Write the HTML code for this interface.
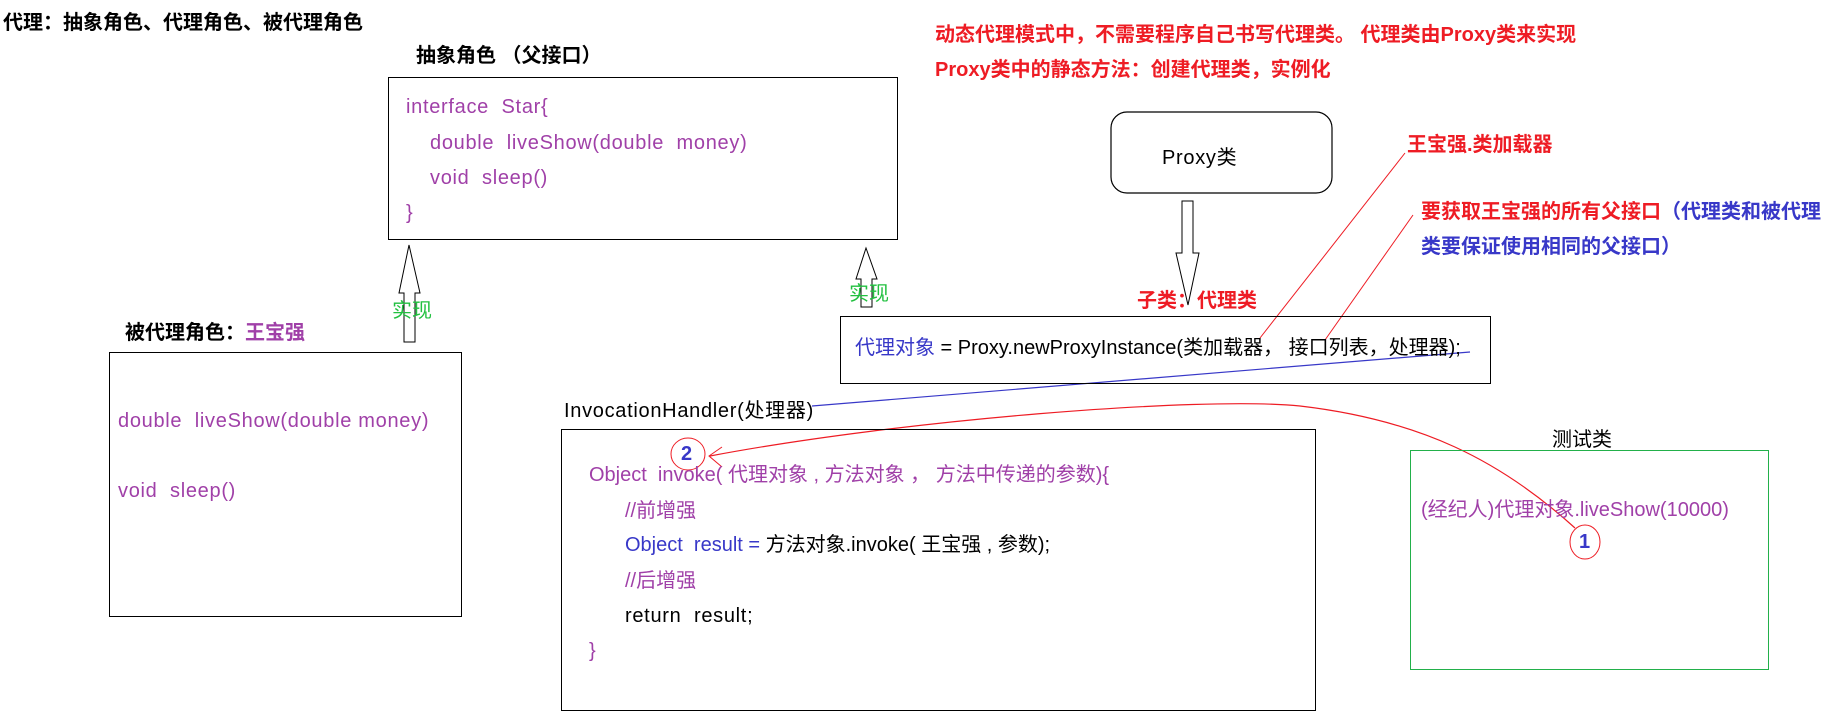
<!DOCTYPE html>
<html><head><meta charset="utf-8"><style>
body{margin:0;width:1825px;height:717px;background:#fff;position:relative;overflow:hidden;font-family:"Liberation Sans","Noto Sans CJK SC",sans-serif;font-size:20px;}
.t{position:absolute;line-height:24px;white-space:pre;}
.c{letter-spacing:0.7px;}
.b{font-weight:bold;}
.p{color:#a040a8;}
.bl{color:#3838c8;}
.r{color:#ee1c24;}
.g{color:#22c040;}
.bx{position:absolute;border:1.5px solid #000;box-sizing:border-box;}
</style></head><body>
<svg width="1825" height="717" style="position:absolute;left:0;top:0">
<path d="M409 245 L420 293 L415 293 L415 342 L404 342 L404 293 L399 293 Z" fill="#fff" stroke="#000" stroke-width="1"/>
<path d="M866 248 L877 279 L872 279 L872 307 L861 307 L861 279 L856 279 Z" fill="#fff" stroke="#000" stroke-width="1"/>
<path d="M1182 201 L1193 201 L1193 253 L1199 253 L1188 305 L1176 253 L1182 253 Z" fill="#fff" stroke="#000" stroke-width="1"/>
<rect x="1111" y="112" width="221" height="81" rx="16" ry="16" fill="none" stroke="#000" stroke-width="1.2"/>
<line x1="1405" y1="153" x2="1260" y2="338" stroke="#ee1c24" stroke-width="1"/>
<line x1="1413" y1="215" x2="1325" y2="340" stroke="#ee1c24" stroke-width="1"/>
<line x1="812" y1="406" x2="1470" y2="352" stroke="#3838c8" stroke-width="1.2"/>
<path d="M1575 528 C1500 460 1420 420 1300 406 C1200 396 900 420 710 456" fill="none" stroke="#ee1c24" stroke-width="1.2"/>
<path d="M722 447 L709 456 L722 467" fill="none" stroke="#ee1c24" stroke-width="1"/>
<ellipse cx="688" cy="454" rx="17" ry="16" fill="none" stroke="#ee1c24" stroke-width="1"/>
<ellipse cx="1585" cy="542" rx="15" ry="17" fill="none" stroke="#ee1c24" stroke-width="1"/>
</svg>

<div class="t b" style="left:3px;top:11px">代理：抽象角色、代理角色、被代理角色</div>
<div class="t b" style="left:416px;top:44px">抽象角色 （父接口）</div>
<div class="bx" style="left:388px;top:77px;width:510px;height:163px"></div>
<div class="t p c" style="left:406px;top:95px">interface  Star{</div>
<div class="t p c" style="left:430px;top:131px">double  liveShow(double  money)</div>
<div class="t p c" style="left:430px;top:166px">void  sleep()</div>
<div class="t p" style="left:406px;top:201px">}</div>

<div class="t g" style="left:392px;top:299px">实现</div>
<div class="t g" style="left:849px;top:282px">实现</div>

<div class="t b" style="left:125px;top:321px">被代理角色：<span class="p">王宝强</span></div>
<div class="bx" style="left:109px;top:352px;width:353px;height:265px"></div>
<div class="t p c" style="left:118px;top:409px">double  liveShow(double money)</div>
<div class="t p c" style="left:118px;top:479px">void  sleep()</div>

<div class="t b r" style="left:935px;top:23px">动态代理模式中，不需要程序自己书写代理类。 代理类由Proxy类来实现</div>
<div class="t b r" style="left:935px;top:58px">Proxy类中的静态方法：创建代理类，实例化</div>
<div class="t c" style="left:1162px;top:146px">Proxy类</div>
<div class="t b r" style="left:1137px;top:289px">子类：代理类</div>
<div class="t b r" style="left:1407px;top:133px">王宝强.类加载器</div>
<div class="t b" style="left:1421px;top:200px"><span class="r">要获取王宝强的所有父接口</span><span class="bl">（代理类和被代理</span></div>
<div class="t b bl" style="left:1421px;top:235px">类要保证使用相同的父接口）</div>

<div class="bx" style="left:840px;top:316px;width:651px;height:68px"></div>
<div class="t" style="left:855px;top:336px"><span class="bl">代理对象</span> = Proxy.newProxyInstance(类加载器， 接口列表，处理器);</div>

<div class="t c" style="left:564px;top:399px">InvocationHandler(处理器)</div>
<div class="bx" style="left:561px;top:429px;width:755px;height:282px"></div>
<div class="t b bl" style="left:681px;top:442px">2</div>
<div class="t p" style="left:589px;top:463px">Object  invoke( 代理对象 , 方法对象 ， 方法中传递的参数){</div>
<div class="t p" style="left:625px;top:499px">//前增强</div>
<div class="t" style="left:625px;top:533px"><span class="bl">Object  result =</span> 方法对象.invoke( 王宝强 , 参数);</div>
<div class="t p" style="left:625px;top:569px">//后增强</div>
<div class="t c" style="left:625px;top:604px">return  result;</div>
<div class="t p" style="left:589px;top:639px">}</div>

<div class="t" style="left:1552px;top:428px">测试类</div>
<div class="bx" style="left:1410px;top:450px;width:359px;height:220px;border-color:#22b04a"></div>
<div class="t p" style="left:1421px;top:498px">(经纪人)代理对象.liveShow(10000)</div>
<div class="t b bl" style="left:1579px;top:530px">1</div>
</body></html>
